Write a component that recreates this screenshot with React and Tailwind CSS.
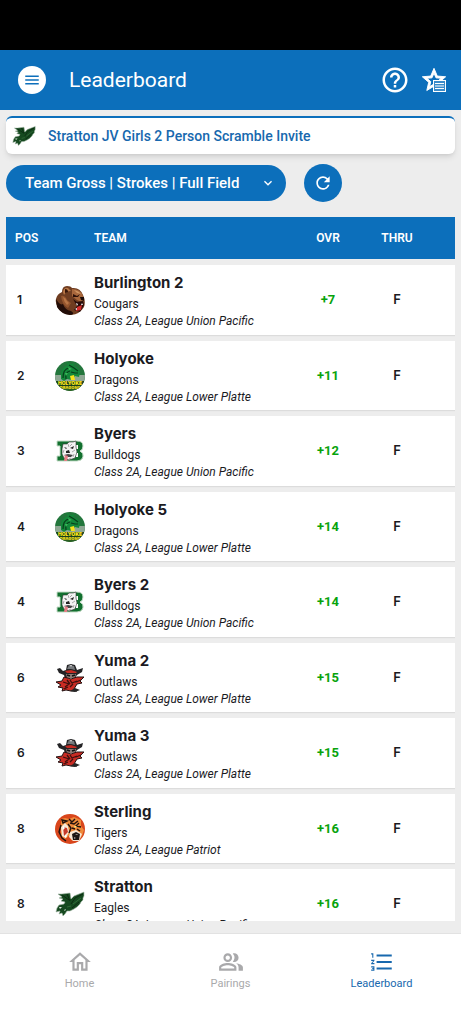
import React, { useState } from "react";
import {
  MdMenu,
  MdHelpOutline,
  MdStarOutline,
  MdRefresh,
  MdKeyboardArrowDown,
  MdOutlineHome,
  MdOutlinePeopleAlt,
  MdFormatListNumbered,
} from "react-icons/md";

const BearLogo = () => (
  <svg viewBox="0 0 30 30" className="w-full h-full" aria-hidden="true">
    <path d="M1 14 Q2 9 7 7 Q7 1 12 1 Q16 1 17 3 Q25 2 28 10 Q31 16 29 22 Q25 29 16 30 Q7 29 3 23 Q0 18 1 14Z" fill="#6f3d21" />
    <path d="M1 14 Q5 21 8 19 Q10 25 16 26 Q21 29 15 30 Q6 29 2 22Z" fill="#220d08" />
    <path d="M8 7 Q9 2 13 3 L16 6 Q11 6 9 10Z" fill="#b97747" />
    <path d="M10 4 Q13 4 13 7 L10 8Z" fill="#351509" />
    <path d="M17 4 Q26 4 28 11 L29 16 Q25 17 22 15 L17 11Z" fill="#a8673c" />
    <path d="M19 5 Q24 6 26 9 L22 8Z" fill="#cf9562" />
    <path d="M18 9 L22 11 L25 9 L23 12 L18 12Z" fill="#2b0f08" />
    <path d="M6 11 Q10 10 12 15 L16 18 L13 23 Q7 20 6 11Z" fill="#94552e" />
    <path d="M8 12 Q11 13 12 16 L14 18 L12 20 Q9 17 8 12Z" fill="#b87545" />
    <path d="M18 14 L22 17 L28 16 L29 20 L25 27 L19 25 L22 21Z" fill="#260b09" />
    <path d="M22 22 L27 20 L26 25 L21 26Z" fill="#d32c2c" />
    <path d="M21 18 L23 19 L22 21Z M27 18 L28 20 L26 20Z M20 24 L22 23 L22 25Z" fill="#fff" />
    <path d="M25 12 L29 12 L29 16 L26 15Z" fill="#1d0b08" />
  </svg>
);

const DragonLogo = () => (
  <svg viewBox="0 0 30 30" className="w-full h-full" aria-hidden="true">
    <defs>
      <clipPath id="dragon-disc">
        <circle cx="15" cy="15" r="15" />
      </clipPath>
    </defs>
    <g clipPath="url(#dragon-disc)">
      <rect width="30" height="30" fill="#23763c" />
      <path d="M0 14 H30 V20 H0Z" fill="#8fa894" />
      <path d="M6 18 Q5 6 13 4 L11 1 L16 3 L20 2 L18 5 Q23 6 25 11 L24 16 L20 15 L17 19 L12 18 L9 20Z" fill="#14883a" />
      <path d="M8 17 Q8 8 14 7 M11 18 Q10 11 15 10 M14 4 L19 7 L23 10 M16 11 L20 12 L23 12" stroke="#073f1a" strokeWidth="1.2" fill="none" />
      <path d="M13 6 L17 8 L14 9Z M10 12 L13 12 L11 15Z" fill="#36b957" />
      <path d="M15 15 L19 14 L20 19 L16 19Z" fill="#f5e21c" />
      <path d="M0 20 H30 V25 H0Z" fill="#18401d" />
      <path d="M0 25 H30 V30 H0Z" fill="#2b5f22" />
      <text x="15" y="24" textAnchor="middle" fontSize="5" fontWeight="900" fill="#ffe81a" className="font-['Inter',sans-serif]">HOLYOKE</text>
      <text x="15" y="28" textAnchor="middle" fontSize="4" fontWeight="900" fill="#e9d31b" className="font-['Inter',sans-serif]">DRAGONS</text>
    </g>
  </svg>
);

const BulldogLogo = () => (
  <svg viewBox="0 0 30 30" className="w-full h-full" aria-hidden="true">
    <path d="M2 5 H22 Q28 5 28 10 Q28 14 25 15 Q29 17 28 21 Q27 25 22 25 H2 V20 H5 V10 H2Z" fill="#12702f" stroke="#c6ddc9" strokeWidth="1" />
    <path d="M21 9 H23 V13 H21Z M21 17 H23 V21 H21Z" fill="#fff" />
    <path d="M8 8 L12 8 L14 6 L18 6 L21 5 L21 11 L22 16 L20 22 L14 24 L9 22 L7 18 L7 13Z" fill="#f2f2f2" stroke="#333" strokeWidth="0.6" />
    <path d="M9 11 L12 12 L11 13Z M15 12 L19 10 L18 13Z M11 15 L14 14 L15 17 L11 17Z" fill="#222" />
    <path d="M9 19 L13 18 L18 19 L16 21 L12 21Z" fill="#444" />
    <path d="M10 19 L13 20 L12 25 L9 25Z" fill="#e77f88" />
    <path d="M13 8 L14 11 M17 8 L15 10 M20 14 L17 16 M19 18 L18 21 M16 22 L14 23 M9 14 L8 17" stroke="#888" strokeWidth="0.7" fill="none" />
  </svg>
);

const OutlawLogo = () => (
  <svg viewBox="0 0 30 30" className="w-full h-full" aria-hidden="true">
    <path d="M2 6 L5 5 L8 8 L11 7 L12 2 L16 1 L20 2 L22 7 L28 5 L27 9 L22 12 L20 15 L10 15 L9 12 L4 10Z" fill="#242426" />
    <path d="M12 6 L14 2 L19 3 L20 7 L16 6Z" fill="#777a7d" />
    <path d="M15 2 L17 2 L16 4Z" fill="#e4e4e4" />
    <path d="M10 8 L16 7 L22 9 L21 10 L12 10Z" fill="#c52a22" />
    <path d="M11 11 L21 11 L20 15 L12 15Z" fill="#8d7974" />
    <path d="M12 12 L15 13 M17 13 L20 12" stroke="#111" strokeWidth="1.5" />
    <path d="M9 14 L16 16 L22 14 L29 14 L25 18 L27 20 L22 21 L19 26 L22 28 L16 28 L11 27 L7 28 L8 25 L3 24 L6 22 L1 19 L7 18Z" fill="#c92c24" stroke="#231313" strokeWidth="1" />
    <path d="M8 19 L14 21 L10 24 M15 17 L17 20 L22 18 M15 24 L18 21 M12 17 L15 21 M21 19 L26 17 M9 26 L13 24" stroke="#3d100e" strokeWidth="1.3" fill="none" />
    <path d="M20 25 L25 27 L20 29 L15 28Z" fill="#262626" />
  </svg>
);

const TigerLogo = () => (
  <svg viewBox="0 0 30 30" className="w-full h-full" aria-hidden="true">
    <circle cx="15" cy="15" r="15" fill="#d9461c" />
    <path d="M6 10 L6 5 L10 4 L14 5 L19 3 L26 6 L26 12 L29 16 L27 22 L23 27 L16 26 L15 21 L10 25 L6 22Z" fill="#ef8b3b" />
    <path d="M6 13 L10 9 L13 12 L14 18 L11 24 L7 22Z" fill="#f8ead9" />
    <path d="M8 13 L12 14 L13 18 L9 22Z" fill="#c73b2b" />
    <path d="M15 18 L21 16 L27 20 L24 27 L18 27 L14 23Z" fill="#f7e7d5" />
    <path d="M17 20 L21 18 L25 20 L24 26 L18 26Z" fill="#1b1514" />
    <path d="M20 20 L23 20 L22 21Z M19 23 L21 24 L19 25Z" fill="#a9a39c" />
    <path d="M7 6 L12 7 L8 9Z M14 5 L17 8 L20 5 M15 9 L19 10 L23 7 M24 9 L21 12 L26 13 M13 10 L16 14 L14 19 M17 14 L20 15 M22 15 L25 17 M6 11 L4 18 L7 24 L11 27" stroke="#21130e" strokeWidth="1.4" fill="none" />
    <path d="M19 12 L22 12 L20 14Z" fill="#f2ef7c" />
    <path d="M8 12 L10 14 L8 16Z M10 21 L12 22 L10 24Z" fill="#fff" />
  </svg>
);

const EagleLogo = () => (
  <svg viewBox="0 0 30 30" className="w-full h-full" aria-hidden="true">
    <path d="M3 5 L7 5 L15 4 L16 10 L19 7 L29 3 L29 7 L28 9 L28 11 L26 13 L25 15 L22 18 L19 20 L15 22 L12 22 L10 25 L8 27 L7 24 L4 25 L5 22 L1 23 L2 19 L4 16 L9 15 L10 13 L6 12 L8 10 L4 9 L7 8Z" fill="#15491f" stroke="#a5b8a7" strokeWidth="0.6" />
    <path d="M7 6 L14 11 M12 5 L15 12 M16 15 L20 9 L28 5 M17 19 L24 13" stroke="#0b2b11" strokeWidth="1" fill="none" />
    <path d="M18 15 L26 9 M12 18 L16 17" stroke="#39733f" strokeWidth="0.8" fill="none" />
    <path d="M4 18 L7 18 L5 20Z M9 21 L11 20 L10 22Z" fill="#dfe8df" />
  </svg>
);

const teams = [
  { pos: 1, name: "Burlington 2", mascot: "Cougars", league: "Class 2A, League Union Pacific", ovr: "+7", Logo: BearLogo },
  { pos: 2, name: "Holyoke", mascot: "Dragons", league: "Class 2A, League Lower Platte", ovr: "+11", Logo: DragonLogo },
  { pos: 3, name: "Byers", mascot: "Bulldogs", league: "Class 2A, League Union Pacific", ovr: "+12", Logo: BulldogLogo },
  { pos: 4, name: "Holyoke 5", mascot: "Dragons", league: "Class 2A, League Lower Platte", ovr: "+14", Logo: DragonLogo },
  { pos: 4, name: "Byers 2", mascot: "Bulldogs", league: "Class 2A, League Union Pacific", ovr: "+14", Logo: BulldogLogo },
  { pos: 6, name: "Yuma 2", mascot: "Outlaws", league: "Class 2A, League Lower Platte", ovr: "+15", Logo: OutlawLogo },
  { pos: 6, name: "Yuma 3", mascot: "Outlaws", league: "Class 2A, League Lower Platte", ovr: "+15", Logo: OutlawLogo },
  { pos: 8, name: "Sterling", mascot: "Tigers", league: "Class 2A, League Patriot", ovr: "+16", Logo: TigerLogo },
  { pos: 8, name: "Stratton", mascot: "Eagles", league: "Class 2A, League Union Pacific", ovr: "+16", Logo: EagleLogo },
];

const tabs = [
  { id: "home", label: "Home", Icon: MdOutlineHome },
  { id: "pairings", label: "Pairings", Icon: MdOutlinePeopleAlt },
  { id: "leaderboard", label: "Leaderboard", Icon: MdFormatListNumbered },
];

const App = () => {
  const [view, setView] = useState("gross");

  return (
    <div className="h-screen flex flex-col bg-[#ededed] text-[#1b1b1f] font-['Roboto',sans-serif]">
      <div className="h-[50px] shrink-0 bg-black" />

      <header className="h-[60px] shrink-0 flex items-center bg-[#0c6fbb] text-white pl-[18px] pr-[13px]">
        <button aria-label="Menu" className="w-7 h-7 rounded-full bg-white text-[#0c6fbb] flex items-center justify-center">
          <MdMenu className="w-[18px] h-[18px]" />
        </button>
        <h1 className="ml-[23px] text-[21px] leading-7">Leaderboard</h1>
        <div className="ml-auto flex items-center gap-2.5">
          <button aria-label="Help">
            <MdHelpOutline className="w-[30px] h-[30px]" />
          </button>
          <button aria-label="Favorites" className="relative">
            <MdStarOutline className="w-7 h-7" stroke="currentColor" strokeWidth="0.8" />
            <svg viewBox="0 0 13 12" className="absolute right-0.5 bottom-0.5 w-[13px] h-3" aria-hidden="true">
              <rect x="0.5" y="0.5" width="12" height="11" fill="#3b8bc9" stroke="#fff" />
              <path d="M2 3.5 H11 M2 6 H11 M2 8.5 H11" stroke="#fff" />
            </svg>
          </button>
        </div>
      </header>

      <main className="flex-1 min-h-0 flex flex-col px-1.5 pt-1.5 pb-3">
        <a href="#event" className="h-[38px] shrink-0 flex items-center gap-3 rounded-md border-t-2 border-[#0c6fbb] bg-white pl-1.5 shadow-md">
          <span className="w-6 h-6">
            <EagleLogo />
          </span>
          <span className="text-[14px] leading-5 font-medium text-[#1768ae]">Stratton JV Girls 2 Person Scramble Invite</span>
        </a>

        <div className="shrink-0 mt-2.5 flex items-center gap-[18px]">
          <div className="relative">
            <select
              aria-label="Leaderboard view"
              value={view}
              onChange={(e) => setView(e.target.value)}
              className="appearance-none w-[280px] h-9 rounded-full bg-[#0c6fbb] text-white text-[15px] font-medium pl-[19px] pr-9"
            >
              <option value="gross">Team Gross | Strokes | Full Field</option>
              <option value="individual">Individual Gross | Strokes | Full Field</option>
            </select>
            <MdKeyboardArrowDown className="absolute right-2.5 top-[10px] w-4 h-4 text-white pointer-events-none" />
          </div>
          <button aria-label="Refresh" className="w-[38px] h-[38px] rounded-full bg-[#0c6fbb] text-white flex items-center justify-center">
            <MdRefresh className="w-5 h-5" />
          </button>
        </div>

        <div className="flex-1 min-h-0 overflow-hidden mt-[9px]">
          <table className="w-full table-fixed border-separate border-spacing-x-0 border-spacing-y-1.5">
            <thead>
              <tr className="h-[42px] bg-[#0c6fbb] text-white text-[12px] leading-4">
                <th className="w-[42px] p-0 pl-[9px] text-left font-semibold">POS</th>
                <th className="w-[46px] p-0" aria-label="Logo" />
                <th className="p-0 text-left font-semibold">TEAM</th>
                <th className="w-[68px] p-0 text-center font-semibold">OVR</th>
                <th className="w-[93px] p-0 pr-[23px] text-center font-semibold">THRU</th>
              </tr>
            </thead>
            <tbody>
              {teams.map((t) => (
                <tr key={t.name} className="h-[70px] even:h-[69px] bg-white shadow-[0_1px_1px_rgba(0,0,0,0.07)]">
                  <td className="p-0 pl-[11px] text-[12px] font-semibold font-['Inter',sans-serif]">{t.pos}</td>
                  <td className="p-0 pl-[7px]">
                    <div className="w-[30px] h-[30px]">
                      <t.Logo />
                    </div>
                  </td>
                  <td className="p-0 whitespace-nowrap">
                    <div className="text-[15px] leading-6 font-bold font-['Inter',sans-serif]">{t.name}</div>
                    <div className="text-[12px] leading-[18px]">{t.mascot}</div>
                    <div className="text-[12px] leading-4 italic">{t.league}</div>
                  </td>
                  <td className="p-0 text-center text-[13px] font-bold text-[#08a30c]">{t.ovr}</td>
                  <td className="p-0 pr-[23px] text-center text-[13px] font-semibold font-['Inter',sans-serif]">F</td>
                </tr>
              ))}
            </tbody>
          </table>
        </div>
      </main>

      <nav className="h-[91px] shrink-0 grid grid-cols-3 items-start bg-white border-t border-[#e2e2e2] px-1 pt-[15px]">
        {tabs.map(({ id, label, Icon }) => (
          <a
            key={id}
            href={`#${id}`}
            className={`flex flex-col items-center gap-px text-[11px] leading-4 ${id === "leaderboard" ? "text-[#1768ae]" : "text-[#a9a9ab]"}`}
          >
            <Icon className="w-[26px] h-[26px]" />
            {label}
          </a>
        ))}
      </nav>
    </div>
  );
};

export default App;
